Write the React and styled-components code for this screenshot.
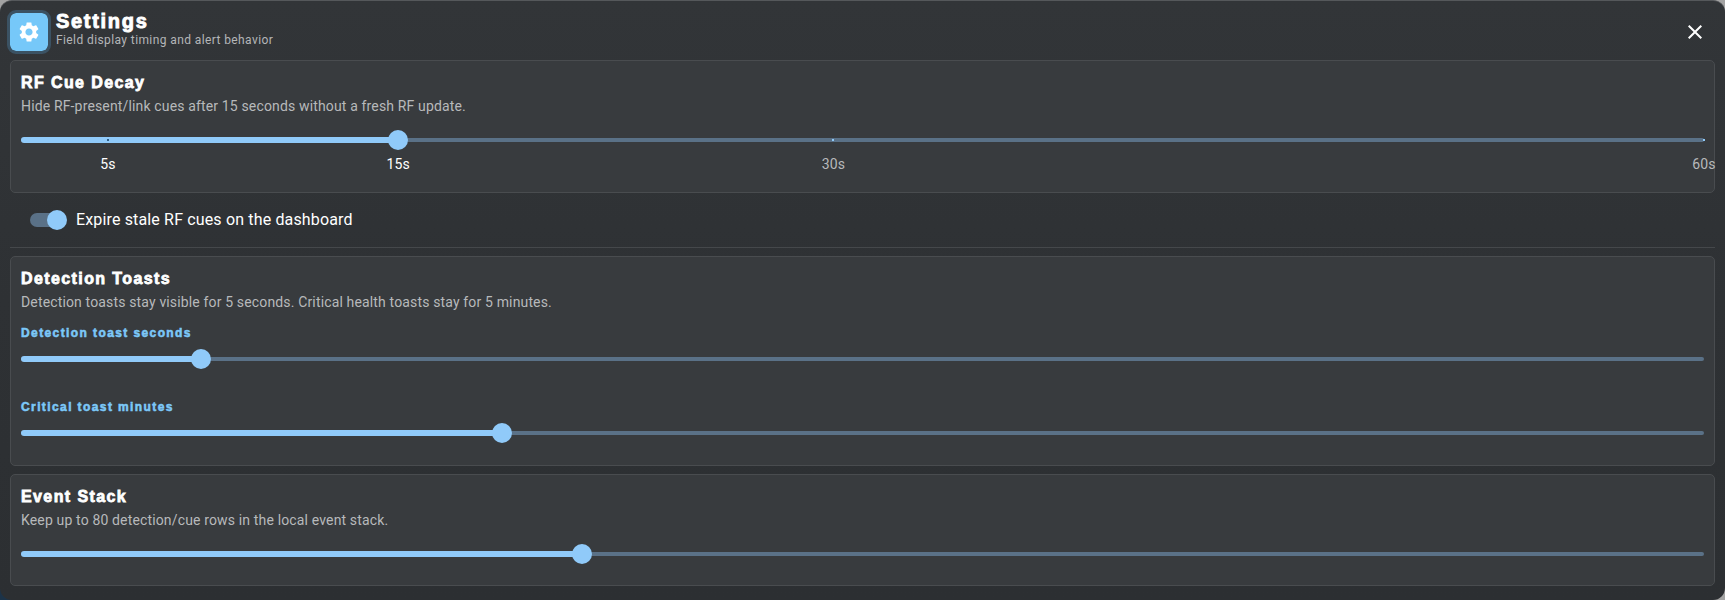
import React from "react";
import styled, { createGlobalStyle } from "styled-components";

const GlobalStyle = createGlobalStyle`
  html, body {
    margin: 0;
    padding: 0;
    background: linear-gradient(to top right, #1c3348 0 5%, #a3a3a3 10%);
  }
  body {
    font-family: Roboto, "Liberation Sans", sans-serif;
    overflow: hidden;
  }
`;

const Dialog = styled.div`
  box-sizing: border-box;
  width: 1725px;
  height: 600px;
  background: linear-gradient(180deg, #323538 0%, #2e3134 50%, #2c2f32 100%);
  border-top: 1px solid #55585b;
  border-radius: 12px;
  padding: 0 10px;
  overflow: hidden;
`;

const Header = styled.header`
  display: flex;
  align-items: center;
  height: 59px;
  padding-top: 3px;
  box-sizing: border-box;
`;

const IconBox = styled.div`
  box-sizing: border-box;
  width: 44px;
  height: 44px;
  margin-left: -3px;
  border: 3px solid #3b5263;
  border-radius: 9px;
  background: #76c8f9;
  background-clip: padding-box;
  display: flex;
  align-items: center;
  justify-content: center;
  color: #fff;
`;

const HeaderText = styled.div`
  margin-left: 5px;
  padding-bottom: 7px;
  flex: 1;
`;

const Title = styled.h1`
  margin: 0;
  font-family: "Liberation Sans", Arial, sans-serif;
  font-size: 20px;
  line-height: 23px;
  font-weight: 700;
  color: #fff;
  -webkit-text-stroke: 0.9px #fff;
  letter-spacing: 1.7px;
`;

const Subtitle = styled.div`
  font-size: 12px;
  line-height: 14px;
  letter-spacing: 0.4px;
  color: #b4b6b8;
`;

const CloseButton = styled.button`
  border: none;
  background: none;
  padding: 0;
  margin-right: 8px;
  color: #fff;
  display: flex;
`;

const Panel = styled.section`
  box-sizing: border-box;
  height: ${(p) => p.$height}px;
  width: 100%;
  padding: 12px 10px 0;
  background: #383b3e;
  border: 1px solid #494c4f;
  border-radius: 5px;
`;

const PanelTitle = styled.h2`
  margin: 0;
  font-family: "Liberation Sans", Arial, sans-serif;
  font-size: 16px;
  line-height: 20px;
  font-weight: 700;
  color: #fff;
  -webkit-text-stroke: 0.8px #fff;
  letter-spacing: 1.4px;
`;

const PanelText = styled.p`
  margin: 3px 0 0;
  font-size: 14px;
  line-height: 20px;
  letter-spacing: 0.15px;
  color: #b7b9bb;
`;

const FieldLabel = styled.div`
  margin-top: ${(p) => p.$top}px;
  font-family: "Liberation Sans", Arial, sans-serif;
  font-size: 12px;
  line-height: 14px;
  font-weight: 700;
  color: #7cc8f8;
  -webkit-text-stroke: 0.55px #7cc8f8;
  letter-spacing: 1.4px;
`;

const SliderRoot = styled.div`
  position: relative;
  height: 6px;
  margin-top: ${(p) => p.$top}px;
`;

const Rail = styled.div`
  position: absolute;
  left: 0;
  right: 0;
  top: 1px;
  height: 4px;
  border-radius: 2px;
  background: #5a7187;
`;

const Fill = styled.div`
  position: absolute;
  left: 0;
  top: 0;
  height: 6px;
  border-radius: 3px;
  background: #90caf9;
`;

const Thumb = styled.div`
  position: absolute;
  top: -7px;
  width: 20px;
  height: 20px;
  margin-left: -10px;
  border-radius: 50%;
  background: #90caf9;
`;

const Tick = styled.div`
  position: absolute;
  top: 2px;
  width: 2px;
  height: 2px;
  margin-left: -1px;
  background: ${(p) => (p.$active ? "#2f5f86" : "#90caf9")};
`;

const MarkLabel = styled.div`
  position: absolute;
  top: 17px;
  transform: translateX(-50%);
  font-size: 14px;
  line-height: 20px;
  letter-spacing: 0.15px;
  color: ${(p) => (p.$active ? "#fff" : "#b7b9bb")};
`;

const ToggleRow = styled.label`
  box-sizing: border-box;
  display: flex;
  align-items: center;
  height: 54px;
  padding: 0 0 1px 20px;
  font-size: 16px;
  letter-spacing: 0.15px;
  color: #fff;
`;

const ToggleTrack = styled.div`
  position: relative;
  width: 34px;
  height: 14px;
  border-radius: 7px;
  background: #5a7187;
  margin-right: 12px;
`;

const ToggleKnob = styled.div`
  position: absolute;
  right: -3px;
  top: -3px;
  width: 20px;
  height: 20px;
  border-radius: 50%;
  background: #90caf9;
`;

const Divider = styled.hr`
  margin: 0 0 8px;
  border: none;
  border-top: 1px solid #45484b;
`;

const Stack = styled.div`
  margin-top: ${(p) => p.$top || 0}px;
`;

const GearIcon = () => (
  <svg width="24" height="24" viewBox="0 0 24 24" fill="currentColor">
    <path d="M19.14 12.94c.04-.3.06-.61.06-.94 0-.32-.02-.64-.07-.94l2.03-1.58c.18-.14.23-.41.12-.61l-1.92-3.32c-.12-.22-.37-.29-.59-.22l-2.39.96c-.5-.38-1.03-.7-1.62-.94l-.36-2.54c-.04-.24-.24-.41-.48-.41h-3.84c-.24 0-.43.17-.47.41l-.36 2.54c-.59.24-1.13.57-1.62.94l-2.39-.96c-.22-.08-.47 0-.59.22L2.74 8.87c-.12.21-.08.47.12.61l2.03 1.58c-.05.3-.09.63-.09.94s.02.64.07.94l-2.03 1.58c-.18.14-.23.41-.12.61l1.92 3.32c.12.22.37.29.59.22l2.39-.96c.5.38 1.03.7 1.62.94l.36 2.54c.05.24.24.41.48.41h3.84c.24 0 .44-.17.47-.41l.36-2.54c.59-.24 1.13-.56 1.62-.94l2.39.96c.22.08.47 0 .59-.22l1.92-3.32c.12-.22.07-.47-.12-.61l-2.01-1.58zM12 15.6c-1.98 0-3.6-1.62-3.6-3.6s1.62-3.6 3.6-3.6 3.6 1.62 3.6 3.6-1.62 3.6-3.6 3.6z" />
  </svg>
);

const CloseIcon = () => (
  <svg width="24" height="24" viewBox="0 0 24 24" fill="currentColor">
    <path d="M19 6.41 17.59 5 12 10.59 6.41 5 5 6.41 10.59 12 5 17.59 6.41 19 12 13.41 17.59 19 19 17.59 13.41 12z" />
  </svg>
);

const pct = (v, min, max) => ((v - min) / (max - min)) * 100;

const Slider = ({ value, min, max, top, marks }) => {
  const p = pct(value, min, max);
  return (
    <SliderRoot $top={top}>
      <Rail />
      <Fill style={{ width: `${p}%` }} />
      {marks &&
        marks.map((m) => (
          <React.Fragment key={m}>
            <Tick $active={m < value} style={{ left: `${pct(m, min, max)}%` }} />
            <MarkLabel $active={m <= value} style={{ left: `${pct(m, min, max)}%` }}>
              {m}s
            </MarkLabel>
          </React.Fragment>
        ))}
      <Thumb style={{ left: `${p}%` }} />
    </SliderRoot>
  );
};

export default function App() {
  return (
    <>
      <GlobalStyle />
      <Dialog>
        <Header>
          <IconBox>
            <GearIcon />
          </IconBox>
          <HeaderText>
            <Title>Settings</Title>
            <Subtitle>Field display timing and alert behavior</Subtitle>
          </HeaderText>
          <CloseButton aria-label="Close">
            <CloseIcon />
          </CloseButton>
        </Header>

        <Panel $height={133}>
          <PanelTitle>RF Cue Decay</PanelTitle>
          <PanelText>Hide RF-present/link cues after 15 seconds without a fresh RF update.</PanelText>
          <Slider value={15} min={2} max={60} top={21} marks={[5, 15, 30, 60]} />
        </Panel>

        <ToggleRow>
          <ToggleTrack>
            <ToggleKnob />
          </ToggleTrack>
          Expire stale RF cues on the dashboard
        </ToggleRow>
        <Divider />

        <Panel $height={210}>
          <PanelTitle>Detection Toasts</PanelTitle>
          <PanelText>Detection toasts stay visible for 5 seconds. Critical health toasts stay for 5 minutes.</PanelText>
          <FieldLabel $top={14}>Detection toast seconds</FieldLabel>
          <Slider value={10.7} min={0} max={100} top={16} />
          <FieldLabel $top={38}>Critical toast minutes</FieldLabel>
          <Slider value={28.6} min={0} max={100} top={16} />
        </Panel>

        <Stack $top={8}>
          <Panel $height={112}>
            <PanelTitle>Event Stack</PanelTitle>
            <PanelText>Keep up to 80 detection/cue rows in the local event stack.</PanelText>
            <Slider value={33.33} min={0} max={100} top={21} />
          </Panel>
        </Stack>
      </Dialog>
    </>
  );
}
